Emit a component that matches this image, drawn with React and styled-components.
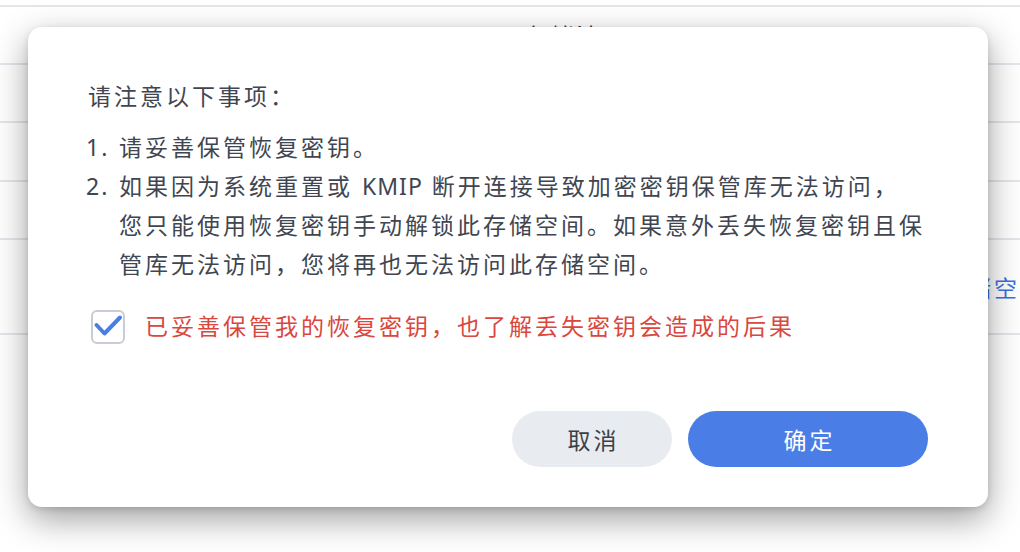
import React from "react";
import styled, { createGlobalStyle } from "styled-components";

const GlobalStyle = createGlobalStyle`
  html, body { margin: 0; padding: 0; background: #ffffff; }
  body {
    font-family: "Noto Sans", "Noto Sans CJK SC", sans-serif;
    -webkit-font-smoothing: antialiased;
  }
`;

const Page = styled.div`
  position: relative;
  width: 1020px;
  height: 552px;
  overflow: hidden;
  background: #ffffff;
`;

const Table = styled.div`
  display: flex;
  flex-direction: column;
  padding-top: 5px;
`;

const Row = styled.div`
  display: grid;
  grid-template-columns: ${(p) => p.$cols || "1fr"};
  align-items: center;
  height: ${(p) => p.$h}px;
  border-top: 2px solid #e3e7ec;
  box-sizing: border-box;
  ${(p) => (p.$last ? "border-bottom: 2px solid #e3e7ec;" : "")}
`;

const Cell = styled.div`
  font-size: 23px;
  letter-spacing: 3px;
  white-space: nowrap;
  color: ${(p) => (p.$link ? "#3d72dc" : "#2f343b")};
`;

const Dialog = styled.div`
  position: absolute;
  left: 28px;
  top: 27px;
  width: 960px;
  height: 480px;
  box-sizing: border-box;
  background: #ffffff;
  border-radius: 14px;
  box-shadow: 0 12px 34px rgba(0, 0, 0, 0.38), 0 2px 6px rgba(0, 0, 0, 0.12);
  padding: 50px 60px 40px 58px;
  display: flex;
  flex-direction: column;
  color: #3f4651;
`;

const Heading = styled.div`
  font-size: 23px;
  letter-spacing: 3px;
  line-height: 39px;
  padding-left: 2px;
`;

const List = styled.div`
  margin-top: 12px;
  display: flex;
  flex-direction: column;
`;

const Item = styled.div`
  display: grid;
  grid-template-columns: 33px 1fr;
  font-size: 23px;
  letter-spacing: 3px;
  line-height: 39px;
  white-space: nowrap;
`;

const Num = styled.span`
  letter-spacing: 2px;
`;

const Latin = styled.span`
  letter-spacing: 1px;
`;

const CheckRow = styled.label`
  margin-top: 23px;
  display: flex;
  align-items: center;
  gap: 20px;
  padding-left: 5px;
`;

const Box = styled.span`
  width: 34px;
  height: 34px;
  box-sizing: border-box;
  border: 2px solid #c8cdd5;
  border-radius: 6px;
  background: #ffffff;
  display: flex;
  align-items: center;
  justify-content: center;
  flex: none;
`;

const Warn = styled.span`
  font-size: 23px;
  letter-spacing: 3px;
  line-height: 39px;
  color: #d9473e;
  white-space: nowrap;
`;

const Actions = styled.div`
  margin-top: auto;
  display: flex;
  justify-content: flex-end;
  gap: 16px;
`;

const Button = styled.button`
  height: 56px;
  width: ${(p) => p.$w}px;
  border: none;
  border-radius: 28px;
  font-family: inherit;
  font-size: 23px;
  letter-spacing: 3px;
  padding: 0 0 0 3px;
  cursor: pointer;
  background: ${(p) => (p.$primary ? "#4a7ee6" : "#e8ebf0")};
  color: ${(p) => (p.$primary ? "#ffffff" : "#3b4048")};
`;

export default function App() {
  return (
    <Page>
      <GlobalStyle />
      <Table>
        <Row $h={58} $cols="524px 1fr">
          <span />
          <Cell>存储池 1</Cell>
        </Row>
        <Row $h={58} />
        <Row $h={59} />
        <Row $h={58} />
        <Row $h={97} $cols="942px 1fr" $last>
          <span />
          <Cell $link>存储空间</Cell>
        </Row>
      </Table>
      <Dialog>
        <Heading>请注意以下事项：</Heading>
        <List>
          <Item>
            <Num>1.</Num>
            <span>请妥善保管恢复密钥。</span>
          </Item>
          <Item>
            <Num>2.</Num>
            <span>
              如果因为系统重置或 <Latin>KMIP</Latin> 断开连接导致加密密钥保管库无法访问，
              <br />
              您只能使用恢复密钥手动解锁此存储空间。如果意外丢失恢复密钥且保
              <br />
              管库无法访问，您将再也无法访问此存储空间。
            </span>
          </Item>
        </List>
        <CheckRow>
          <Box>
            <svg width="30" height="30" viewBox="0 0 30 30">
              <path
                d="M3.5 13 L11.5 21.5 L27 5.5"
                fill="none"
                stroke="#4a7ee4"
                strokeWidth="4"
                strokeLinecap="round"
                strokeLinejoin="round"
              />
            </svg>
          </Box>
          <Warn>已妥善保管我的恢复密钥，也了解丢失密钥会造成的后果</Warn>
        </CheckRow>
        <Actions>
          <Button $w={160}>取消</Button>
          <Button $w={240} $primary>确定</Button>
        </Actions>
      </Dialog>
    </Page>
  );
}
